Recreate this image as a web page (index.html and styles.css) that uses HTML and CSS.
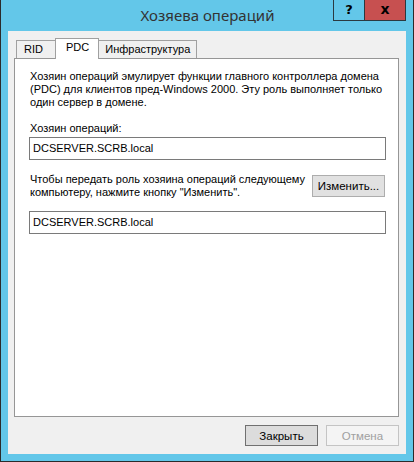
FILE: index.html
```html
<!DOCTYPE html>
<html lang="ru">
<head>
    <meta charset="UTF-8">
    <title>Хозяева операций</title>
    <link rel="stylesheet" href="styles.css">
</head>
<body>
    <div class="window">
        <div class="titlebar">
            <div class="title">Хозяева операций</div>
            <div class="caption-buttons">
                <div class="cap-btn help">?</div>
                <div class="cap-btn close">x</div>
            </div>
        </div>

        <div class="client">
            <!-- Вкладки -->
            <div class="tabs">
                <div class="tab">RID</div>
                <div class="tab active">PDC</div>
                <div class="tab">Инфраструктура</div>
            </div>

            <div class="panel">
                <p class="desc">Хозяин операций эмулирует функции главного контроллера домена<br>(PDC) для клиентов пред-Windows 2000. Эту роль выполняет только<br>один сервер в домене.</p>
                <p class="label">Хозяин операций:</p>
                <div class="field">DCSERVER.SCRB.local</div>
                <div class="change-row">
                    <p>Чтобы передать роль хозяина операций следующему<br>компьютеру, нажмите кнопку "Изменить".</p>
                    <button class="btn change">Изменить...</button>
                </div>
                <div class="field">DCSERVER.SCRB.local</div>
            </div>

            <div class="footer">
                <button class="btn default">Закрыть</button>
                <button class="btn" disabled>Отмена</button>
            </div>
        </div>
    </div>
</body>
</html>
```

FILE: styles.css
```css
body {
    margin: 0;
    font-family: "Liberation Sans", Arial, sans-serif;
    font-size: 11px;
    color: #000;
}
.window {
    width: 414px;
    height: 462px;
    box-sizing: border-box;
    background-color: #63c7e9;
    border: 1px solid #2b2b2b;
    border-top: none;
    padding: 0 7px 7px 7px;
    display: flex;
    flex-direction: column;
}
.titlebar {
    height: 31px;
    display: grid;
    grid-template-columns: 1fr auto 1fr;
}
.title {
    grid-column: 2;
    font-family: "Noto Sans", sans-serif;
    font-size: 15px;
    color: #333;
    line-height: 31px;
    padding-left: 1px;
}
.caption-buttons {
    grid-column: 3;
    justify-self: end;
    display: flex;
    height: 21px;
}
.cap-btn {
    box-sizing: border-box;
    height: 21px;
    border: 1px solid #2b3a40;
    border-top: none;
    font-family: "DejaVu Sans", sans-serif;
    font-weight: bold;
    font-size: 13px;
    line-height: 19px;
    text-align: center;
}
.help {
    width: 31px;
    border-right: none;
    background-color: #63c7e9;
}
.close {
    width: 42px;
    background-color: #c75050;
    font-size: 14px;
    line-height: 18px;
}
.client {
    flex: 1;
    background-color: #f0f0f0;
    padding: 7px 7px 0 6px;
    display: flex;
    flex-direction: column;
}
.tabs {
    display: flex;
    align-items: flex-end;
    padding-left: 2px;
    height: 20px;
    position: relative;
    z-index: 1;
}
.tab {
    box-sizing: border-box;
    height: 18px;
    padding: 0 6px;
    line-height: 17px;
    border: 1px solid #a0a0a0;
    border-bottom: none;
    background-color: #f0f0f0;
    margin-right: -1px;
}
.tab.active {
    height: 21px;
    margin-bottom: -1px;
    background-color: #fff;
    padding: 0 9px 0 10px;
    line-height: 17px;
    margin-left: -1px;
    margin-right: -1px;
    position: relative;
}
.tab:first-child {
    width: 41px;
    padding-left: 7px;
}
.panel {
    flex: 1;
    background-color: #fff;
    border: 1px solid #969696;
    padding: 11px 12px 0 15px;
}
.panel p {
    margin: 0;
    line-height: 13px;
    white-space: nowrap;
}
.label {
    margin-top: 13px !important;
}
.field {
    box-sizing: border-box;
    height: 23px;
    margin: 2px 0 0 -1px;
    border: 1px solid #7a7a7a;
    padding-left: 3px;
    line-height: 21px;
}
.change-row {
    display: flex;
    justify-content: space-between;
    align-items: center;
    margin: 13px 0 12px 0;
}
.btn {
    box-sizing: border-box;
    height: 22px;
    font-family: "Liberation Sans", Arial, sans-serif;
    font-size: 11.5px;
    color: #000;
    background-color: #e1e1e1;
    border: 1px solid #adadad;
    padding: 0;
}
.change {
    width: 73px;
    margin-right: 1px;
}
.footer {
    display: flex;
    justify-content: flex-end;
    gap: 8px;
    padding: 8px 0 8px 0;
}
.footer .btn {
    width: 73px;
    height: 21px;
}
.footer .default {
    border-color: #707070;
    background-color: #dcdcdc;
}
.btn:disabled {
    background-color: #f4f4f4;
    border-color: #c4c4c4;
    color: #a0a0a0;
}
```
